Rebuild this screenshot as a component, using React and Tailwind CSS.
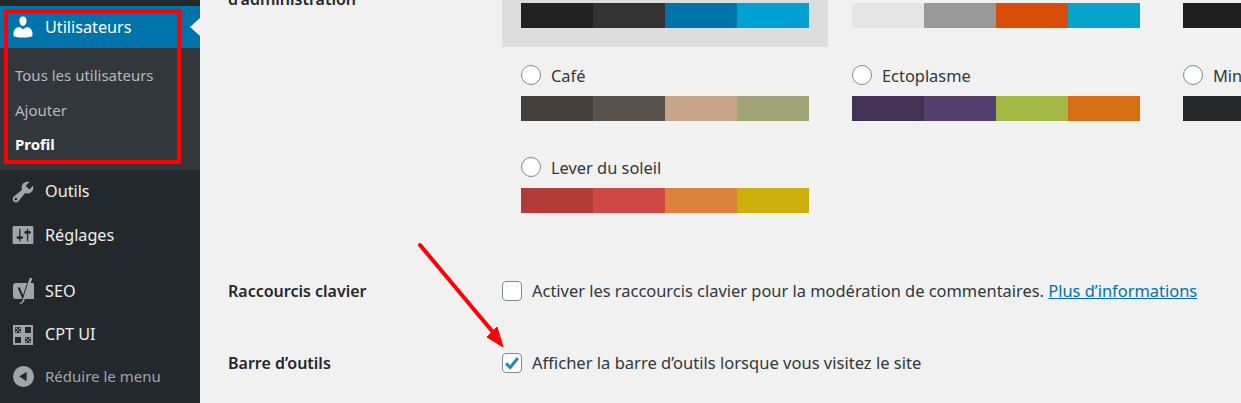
const schemes = [
  ["Défaut", ["#222222", "#333333", "#0073aa", "#00a0d2"], true],
  ["Clair", ["#e5e5e5", "#999999", "#d64e07", "#04a4cc"]],
  ["Moderne", ["#1e1e1e", "#3858e9", "#7b90ff", "#33f078"]],
  ["Café", ["#46403c", "#59524c", "#c7a589", "#9ea476"]],
  ["Ectoplasme", ["#413256", "#523f6d", "#a3b745", "#d46f15"]],
  ["Minuit", ["#25282b", "#363b3f", "#69a8bb", "#e14d43"]],
  ["Lever du soleil", ["#b43c38", "#cf4944", "#dd823b", "#ccaf0b"]],
];

function Tile({ name, colors, selected, first }) {
  return (
    <div className={`w-[326px] px-[19px] shrink-0 ${first ? "h-[88px]" : "h-[87px]"} ${selected ? "bg-[#dddddd]" : ""}`}>
      <label className="flex items-center h-[44px] pt-[2px] gap-[10px] text-[#32373c] text-[16.4px] whitespace-nowrap">
        <span className="w-[20px] h-[20px] rounded-full border border-[#7e8993] bg-white shrink-0" />
        <span className="relative top-[1px]">{!first && name}</span>
      </label>
      <div className="flex w-[288px] h-[25px]">
        {colors.map((c) => (
          <div key={c} className="flex-1" style={{ backgroundColor: c }} />
        ))}
      </div>
    </div>
  );
}

function Check({ checked }) {
  return (
    <span className="w-[20px] h-[20px] rounded-[4px] border border-[#7e8993] bg-white shrink-0 flex items-center justify-center">
      {checked && (
        <svg viewBox="0 0 20 20" className="w-[18px] h-[18px]">
          <path d="M3.500 10.500 L8 15 L16.500 4.500" fill="none" stroke="#1e8cbe" strokeWidth="3.400" />
        </svg>
      )}
    </span>
  );
}

function Item({ icon, label, dim, h }) {
  return (
    <div className={`${h} flex items-center pl-[10px] ${dim ? "text-[#a0a5aa] text-[15px]" : "text-[#eeeeee] text-[16.200px]"}`}>
      <span className="w-[26px] h-[26px] shrink-0 flex items-center justify-center">{icon}</span>
      <span className="ml-[9px] whitespace-nowrap">{label}</span>
    </div>
  );
}

const G = "#a0a5aa";
const D = "#23282d";

export default function App() {
  return (
    <div className="relative flex w-[1241px] h-[403px] overflow-hidden bg-[#f1f1f1] font-['Noto_Sans',sans-serif]">
      <aside className="w-[200px] shrink-0 bg-[#23282d] flex flex-col">
        <div className="h-[6px]" />
        <div className="relative h-[42px] bg-[#0073aa] flex items-center pl-[10px] text-white text-[16.200px]">
          <svg viewBox="0 0 20 20" className="w-[26px] h-[26px]">
            <path d="M10 9.250c-2.270 0-2.730-3.440-2.730-3.440C7 4.020 7.820 2 9.970 2c2.160 0 2.980 2.020 2.710 3.810 0 0-.41 3.440-2.680 3.440zm0 2.570L12.720 10c2.390 0 4.520 2.330 4.520 4.530v2.490s-3.650 1.130-7.240 1.130c-3.650 0-7.240-1.130-7.240-1.130v-2.490c0-2.250 1.940-4.480 4.470-4.480z" fill="#fff" />
          </svg>
          <span className="ml-[9px]">Utilisateurs</span>
          <span className="absolute right-0 top-[12px] w-0 h-0 border-y-[9px] border-y-transparent border-r-[10px] border-r-[#f1f1f1]" />
        </div>
        <div className="h-[122px] bg-[#32373c] flex flex-col pt-[10px] pl-[15px] text-[15px] text-[#b4b9be]">
          <div className="h-[35px] flex items-center">Tous les utilisateurs</div>
          <div className="h-[35px] flex items-center">Ajouter</div>
          <div className="h-[33px] flex items-center font-bold text-white">Profil</div>
        </div>
        <Item
          h="h-[43px]"
          label="Outils"
          icon={
            <svg viewBox="0 0 20 20" className="w-[26px] h-[26px]">
              <path fillRule="evenodd" d="M16.680 9.770c-1.340 1.340-3.300 1.670-4.950.99l-5.410 6.520c-.99.99-2.590.99-3.570 0s-.99-2.590 0-3.570l6.520-5.420c-.68-1.650-.35-3.610.99-4.950 1.280-1.280 3.120-1.620 4.720-1.060l-2.890 2.890 2.820 2.820 2.860-2.860c.53 1.580.18 3.390-1.090 4.640zM3.810 16.210c.4.390 1.030.39 1.420 0 .4-.4.4-1.030 0-1.430-.39-.39-1.020-.39-1.420 0-.39.4-.39 1.030 0 1.430z" fill={G} />
            </svg>
          }
        />
        <Item
          h="h-[44px]"
          label="Réglages"
          icon={
            <svg viewBox="0 0 20 20" className="w-[26px] h-[26px]">
              <path fillRule="evenodd" d="M18 16V4c0-.55-.45-1-1-1H3c-.55 0-1 .45-1 1v12c0 .55.45 1 1 1h14c.55 0 1-.45 1-1zM8 11h1c.55 0 1 .45 1 1s-.45 1-1 1H8v1.500c0 .28-.22.5-.5.5s-.5-.22-.5-.5V13H6c-.55 0-1-.45-1-1s.45-1 1-1h1V5.500c0-.28.22-.5.5-.5s.5.22.5.5V11zm5-2h-1c-.55 0-1-.45-1-1s.45-1 1-1h1V5.500c0-.28.22-.5.5-.5s.5.22.5.5V7h1c.55 0 1 .45 1 1s-.45 1-1 1h-1v5.500c0 .28-.22.5-.5.5s-.5-.22-.5-.5V9z" fill={G} />
            </svg>
          }
        />
        <div className="h-[12px]" />
        <Item
          h="h-[44px]"
          label="SEO"
          icon={
            <svg viewBox="0 0 26 26" className="w-[26px] h-[26px]">
              <path d="M6 5h16.500c.8 0 1.500.7 1.500 1.500V21H6c-2 0-3-1.200-3-3V8c0-1.800 1-3 3-3z" fill={G} />
              <path d="M7.500 9.500 H10 L13 17 L18.200 2 H20.500 L13 23.500 C12.200 25.300 11 26 9 26 V24.800 C10.500 24.500 11.300 23.800 11.800 22.500 L12.200 20.500 Z" fill={D} />
              <path d="M19.500 0 H22.500 L14 23 C13.200 25 11.500 26 9.500 26 V25 C11 24.800 12 24 12.500 22.500 Z" fill={G} />
            </svg>
          }
        />
        <Item
          h="h-[43px]"
          label="CPT UI"
          icon={
            <svg viewBox="0 0 26 26" className="w-[26px] h-[26px]">
              <g fill="none" stroke={G} strokeWidth="2">
                <rect x="4" y="4" width="8" height="8" />
                <rect x="14" y="4" width="8" height="8" />
                <rect x="4" y="14" width="8" height="8" />
                <rect x="14" y="14" width="8" height="8" />
              </g>
              <path d="M5.500 5.500h1.500v1.500H5.500z M9 5.500h1.500v1.500H9z M7.300 7.300h1.400v1.400H7.300z M5.500 9h1.500v1.500H5.500z M9 9h1.500v1.500H9z M15.500 15.500h1.500v1.500h-1.500z M19 15.500h1.500v1.500H19z M17.300 17.300h1.400v1.400h-1.400z M15.500 19h1.500v1.500h-1.500z M19 19h1.500v1.500H19z" fill={G} />
            </svg>
          }
        />
        <Item
          h="h-[41px]"
          dim
          label="Réduire le menu"
          icon={
            <svg viewBox="0 0 20 20" className="w-[21px] h-[21px]">
              <circle cx="10" cy="10" r="10" fill={G} />
              <path d="M13 5.500v9L6 10z" fill={D} />
            </svg>
          }
        />
      </aside>

      <main className="flex-1 min-w-0 flex flex-col pl-[28px] text-[#23282d] text-[16px]">
        <div className="flex h-[269px]">
          <div className="w-[274px] shrink-0 font-semibold leading-[20px] -mt-[11px]">d’administration</div>
          <div className="-mt-[41px] grid grid-cols-[326px_326px_326px] gap-x-[5px] gap-y-[5px] content-start h-fit">
            {schemes.map(([name, colors, selected], i) => (
              <Tile key={name} name={name} colors={colors} selected={selected} first={i < 3} />
            ))}
          </div>
        </div>
        <div className="flex items-center h-[44px]">
          <div className="w-[274px] shrink-0 font-semibold">Raccourcis clavier</div>
          <Check />
          <span className="ml-[10px] text-[#32373c] text-[16.430px] whitespace-nowrap">
            Activer les raccourcis clavier pour la modération de commentaires.{" "}
            <span className="text-[#0073aa] underline">Plus d’informations</span>
          </span>
        </div>
        <div className="flex items-center h-[28px] mt-[36px]">
          <div className="w-[274px] shrink-0 font-semibold">Barre d’outils</div>
          <Check checked />
          <span className="ml-[10px] text-[#32373c] text-[16.550px] whitespace-nowrap">
            Afficher la barre d’outils lorsque vous visitez le site
          </span>
        </div>
      </main>

      <div className="absolute left-[4px] top-[9px] w-[177px] h-[155px] border-[4px] border-[#ff0000] rounded-[2px] pointer-events-none" />
      <svg className="absolute left-0 top-0 pointer-events-none" width="1241" height="403">
        <path d="M420 245 L492 331" stroke="#ff0000" strokeWidth="4" strokeLinecap="round" />
        <path d="M503 347 L487 337 L497 327 Z" fill="#ff0000" stroke="#ff0000" strokeWidth="1" />
      </svg>
    </div>
  );
}
